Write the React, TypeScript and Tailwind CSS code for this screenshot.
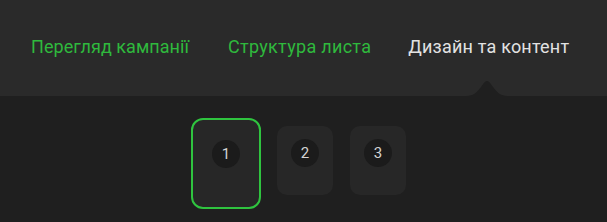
import React from "react";

export default function App() {
  const font = { fontFamily: "Roboto, 'Noto Sans', sans-serif" };
  return (
    <div className="w-[607px] h-[222px] bg-[#1f1f1f] overflow-hidden" style={font}>
      <div className="relative h-[96px] bg-[#2a2a2a]">
        <div className="flex gap-[39px] pl-[31px] pt-[36px] text-[18px] leading-[22px]">
          <span className="text-[#2fb93d] tracking-[0.05px]">Перегляд кампанії</span>
          <span className="text-[#2fb93d] tracking-[0.3px]">Структура листа</span>
          <span className="text-[#e2e2e2] tracking-[0.2px] ml-[-2px]">Дизайн та контент</span>
        </div>
        <svg className="absolute left-[466px] bottom-0" width="42" height="16" viewBox="0 0 42 16">
          <path d="M0 16 C8 16 11 12 15 7 C18 3 19 1 21 1 C23 1 24 3 27 7 C31 12 34 16 42 16 Z" fill="#1f1f1f" />
        </svg>
      </div>
      <div className="flex items-start pl-[191px] pt-[22px] gap-[16px]">
        <div className="w-[70px] h-[91px] rounded-[12px] border-2 border-[#2fc43f] bg-[#272727] flex justify-center pt-[20px]">
          <div className="w-[28px] h-[28px] rounded-full bg-[#1b1b1b] flex items-center justify-center text-[15px] text-[#d4d4d4]">1</div>
        </div>
        <div className="mt-[8px] w-[56px] h-[69px] rounded-[10px] bg-[#272727] flex justify-center pt-[13px]">
          <div className="w-[28px] h-[28px] rounded-full bg-[#1b1b1b] flex items-center justify-center text-[15px] text-[#d4d4d4]">2</div>
        </div>
        <div className="mt-[8px] ml-[1px] w-[56px] h-[69px] rounded-[10px] bg-[#272727] flex justify-center pt-[13px]">
          <div className="w-[28px] h-[28px] rounded-full bg-[#1b1b1b] flex items-center justify-center text-[15px] text-[#d4d4d4]">3</div>
        </div>
      </div>
    </div>
  );
}
